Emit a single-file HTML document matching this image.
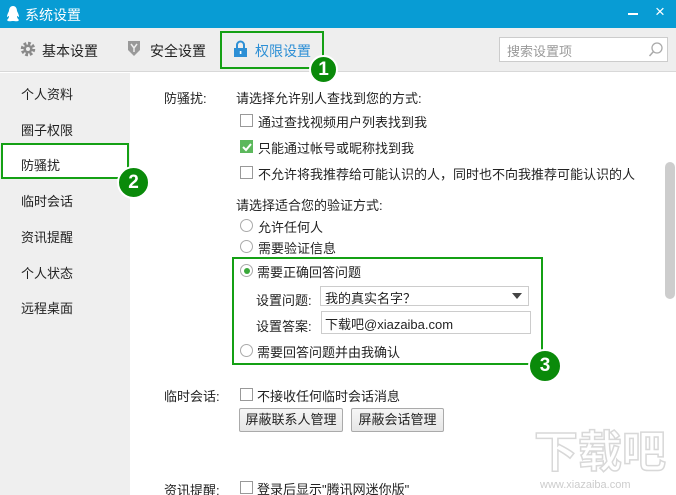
<!DOCTYPE html>
<html><head><meta charset="utf-8"><style>
*{margin:0;padding:0;box-sizing:border-box}
html,body{width:676px;height:495px;overflow:hidden}
body{position:relative;background:#fff;font-family:"Liberation Sans","Noto Sans CJK SC",sans-serif;font-size:13px;color:#222}
.a{position:absolute;white-space:nowrap}
.cb{position:absolute;width:13px;height:13px;border:1px solid #999;background:#fff}
.rd{position:absolute;width:13px;height:13px;border:1px solid #aaa;border-radius:50%;background:#fff}
.badge{position:absolute;border-radius:50%;background:#0a8a0a;border:2px solid #fff;color:#fff;font-weight:bold;font-size:19px;text-align:center;font-family:"Liberation Sans",sans-serif}
.btn{position:absolute;height:24px;border:1px solid #aaa;border-radius:2px;background:linear-gradient(#f6f6f6,#e6e6e6);text-align:center;line-height:22px}
</style></head><body>
<div class="a" style="left:0;top:0;width:676px;height:28px;background:#089cd4"></div>
<svg class="a" style="left:6px;top:5px" width="14" height="18" viewBox="0 0 14 18"><path d="M7 1C4 1 3 4 3 6C2 8 1 10 1 12C2 12 2 11 3 11C3 13 2 14 1 15C2 17 5 16 7 16C9 16 12 17 13 15C12 14 11 13 11 11C12 11 12 12 13 12C13 10 12 8 11 6C11 4 10 1 7 1Z" fill="#fff"/></svg>
<div class="a" style="left:25px;top:5px;color:#fff;font-size:14px">系统设置</div>
<div class="a" style="left:628px;top:13px;width:10px;height:2px;background:#fff"></div>
<div class="a" style="left:655px;top:2px;color:#fff;font-size:17px">×</div>
<div class="a" style="left:0;top:28px;width:676px;height:44px;background:#eeeeee;border-bottom:1px solid #d8d8d8"></div>
<svg class="a" style="left:20px;top:41px" width="16" height="16" viewBox="0 0 16 16"><circle cx="8" cy="8" r="5.5" fill="none" stroke="#8a8a8a" stroke-width="3.5" stroke-dasharray="2.6 1.7"/><circle cx="8" cy="8" r="4.5" fill="#8a8a8a"/><circle cx="8" cy="8" r="2" fill="#eee"/></svg>
<div class="a" style="left:42px;top:41px;font-size:14px">基本设置</div>
<svg class="a" style="left:127px;top:40px" width="14" height="17" viewBox="0 0 14 17"><path d="M1 1H13V10L7 16L1 10Z" fill="#999"/><path d="M4 4L7 8L10 4M7 8V12" stroke="#eee" stroke-width="1.5" fill="none"/></svg>
<div class="a" style="left:150px;top:41px;font-size:14px">安全设置</div>
<svg class="a" style="left:233px;top:40px" width="15" height="17" viewBox="0 0 15 17"><path d="M4 8V5A3.5 3.5 0 0 1 11 5V8" stroke="#2d8fd5" stroke-width="2" fill="none"/><rect x="1" y="8" width="13" height="9" fill="#2d8fd5"/><rect x="6.8" y="11" width="1.6" height="3" fill="#fff"/></svg>
<div class="a" style="left:255px;top:41px;font-size:14px;color:#2d8fd5">权限设置</div>
<div class="a" style="left:220px;top:31px;width:104px;height:38px;border:2px solid #14a014"></div>
<div class="badge" style="left:309px;top:55px;width:29px;height:29px;line-height:25px">1</div>
<div class="a" style="left:499px;top:37px;width:169px;height:25px;border:1px solid #ccc;background:#fff"></div>
<div class="a" style="left:507px;top:41px;color:#999">搜索设置项</div>
<svg class="a" style="left:648px;top:41px" width="16" height="17" viewBox="0 0 16 17"><circle cx="9" cy="7" r="5" fill="none" stroke="#aaa" stroke-width="1.3"/><path d="M5.5 10.5L1.5 15" stroke="#aaa" stroke-width="1.5"/></svg>
<div class="a" style="left:0;top:73px;width:130px;height:422px;background:#efefef"></div>
<div class="a" style="left:21px;top:84px">个人资料</div>
<div class="a" style="left:21px;top:120px">圈子权限</div>
<div class="a" style="left:1px;top:143px;width:128px;height:36px;border:2px solid #14a014;background:#fff"></div>
<div class="a" style="left:21px;top:155px">防骚扰</div>
<div class="badge" style="left:117px;top:166px;width:33px;height:33px;line-height:29px">2</div>
<div class="a" style="left:21px;top:191px">临时会话</div>
<div class="a" style="left:21px;top:227px">资讯提醒</div>
<div class="a" style="left:21px;top:263px">个人状态</div>
<div class="a" style="left:21px;top:298px">远程桌面</div>
<div class="a" style="left:665px;top:162px;width:10px;height:137px;background:#cdcdcd;border-radius:5px"></div>
<div class="a" style="left:164px;top:88px">防骚扰:</div>
<div class="a" style="left:236px;top:88px">请选择允许别人查找到您的方式:</div>
<div class="cb" style="left:240px;top:114px"></div><div class="a" style="left:258px;top:112px">通过查找视频用户列表找到我</div>
<div class="cb" style="left:240px;top:140px;background:#5cb85c;border-color:#5cb85c"></div>
<svg class="a" style="left:241px;top:141px" width="12" height="12" viewBox="0 0 12 12"><path d="M2 6L5 9L10 3" stroke="#fff" stroke-width="2" fill="none"/></svg>
<div class="a" style="left:258px;top:138px">只能通过帐号或昵称找到我</div>
<div class="cb" style="left:240px;top:166px"></div><div class="a" style="left:258px;top:164px">不允许将我推荐给可能认识的人，同时也不向我推荐可能认识的人</div>
<div class="a" style="left:236px;top:195px">请选择适合您的验证方式:</div>
<div class="rd" style="left:240px;top:219px"></div><div class="a" style="left:258px;top:217px">允许任何人</div>
<div class="rd" style="left:240px;top:240px"></div><div class="a" style="left:258px;top:238px">需要验证信息</div>
<div class="a" style="left:232px;top:257px;width:311px;height:108px;border:2px solid #14a014"></div>
<div class="rd" style="left:240px;top:264px"></div><div class="a" style="left:244px;top:268px;width:6px;height:6px;border-radius:50%;background:#3aa83a"></div>
<div class="a" style="left:257px;top:262px">需要正确回答问题</div>
<div class="a" style="left:256px;top:290px">设置问题:</div>
<div class="a" style="left:320px;top:286px;width:209px;height:20px;border:1px solid #ccc"></div>
<div class="a" style="left:325px;top:288px">我的真实名字？</div>
<div class="a" style="left:512px;top:293px;border-left:5px solid transparent;border-right:5px solid transparent;border-top:6px solid #444"></div>
<div class="a" style="left:256px;top:316px">设置答案:</div>
<div class="a" style="left:321px;top:311px;width:210px;height:23px;border:1px solid #ccc"></div>
<div class="a" style="left:325px;top:314px">下载吧@xiazaiba.com</div>
<div class="rd" style="left:240px;top:344px"></div><div class="a" style="left:257px;top:342px">需要回答问题并由我确认</div>
<div class="badge" style="left:528px;top:349px;width:34px;height:34px;line-height:30px">3</div>
<div class="a" style="left:164px;top:386px">临时会话:</div>
<div class="cb" style="left:240px;top:388px"></div><div class="a" style="left:257px;top:386px">不接收任何临时会话消息</div>
<div class="btn" style="left:239px;top:408px;width:104px">屏蔽联系人管理</div>
<div class="btn" style="left:351px;top:408px;width:93px">屏蔽会话管理</div>
<div class="a" style="left:164px;top:480px">资讯提醒:</div>
<div class="cb" style="left:240px;top:481px"></div><div class="a" style="left:257px;top:479px">登录后显示"腾讯网迷你版"</div>
<div class="a" style="left:534px;top:426px;font-size:44px;line-height:54px;color:#fff;-webkit-text-stroke:1.5px #d8d8d8;font-weight:bold">下载吧</div>
<div class="a" style="left:540px;top:479px;font-size:11px;color:#ccc">www.xiazaiba.com</div>
</body></html>
